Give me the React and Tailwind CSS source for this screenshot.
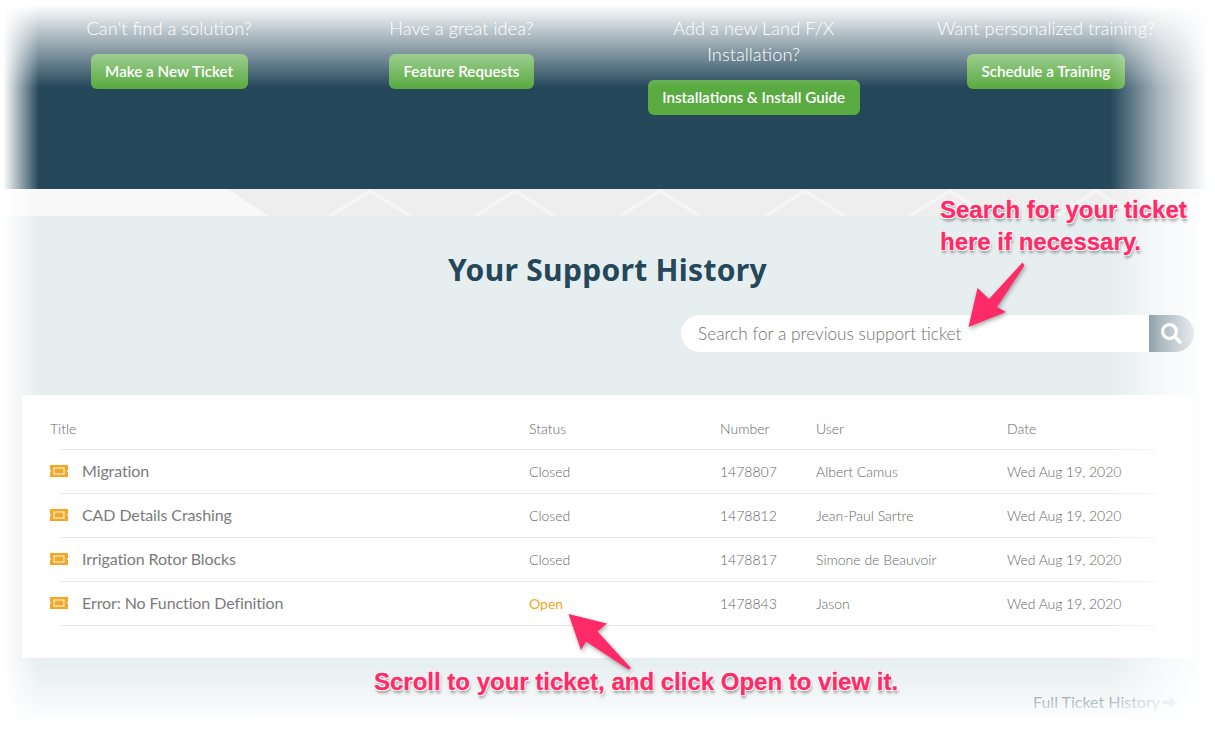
import React from "react";
import { FaSearch } from "react-icons/fa";

const prompts = [
  { q: "Can't find a solution?", label: "Make a New Ticket" },
  { q: "Have a great idea?", label: "Feature Requests" },
  { q: "Add a new Land F/X Installation?", label: "Installations & Install Guide" },
  { q: "Want personalized training?", label: "Schedule a Training" },
];

const tickets = [
  { title: "Migration", status: "Closed", number: "1478807", user: "Albert Camus" },
  { title: "CAD Details Crashing", status: "Closed", number: "1478812", user: "Jean-Paul Sartre" },
  { title: "Irrigation Rotor Blocks", status: "Closed", number: "1478817", user: "Simone de Beauvoir" },
  { title: "Error: No Function Definition", status: "Open", number: "1478843", user: "Jason" },
];

const apexes = [370, 515, 660, 805, 950, 1096];
const rowGrid = "grid grid-cols-[469px_191px_96px_191px_149px] items-center ml-[38px] mr-[37px] border-b border-[#e9e9e9]";
const calloutText =
  "font-['Liberation_Sans',Arial,sans-serif] font-bold text-[24px] leading-[32px] text-[#ff2a68] whitespace-nowrap [-webkit-text-stroke:0.3px_#ff2a68] [text-shadow:1px_1px_0_#fff,-1px_-1px_0_#fff,1px_-1px_0_#fff,-1px_1px_0_#fff,1px_3px_3px_rgba(0,0,0,0.4)]";

function TicketIcon() {
  return (
    <svg width="18" height="12" viewBox="0 0 18 12" className="shrink-0">
      <path d="M0 0H18V5A1 1 0 0 0 18 7V12H0V7A1 1 0 0 0 0 5Z" fill="#f5a623" />
      <rect x="4" y="3" width="10" height="6" fill="none" stroke="#fff" strokeWidth="1" />
    </svg>
  );
}

function Chevrons() {
  return (
    <svg width="1215" height="27" viewBox="0 0 1215 27" className="absolute inset-0">
      <path d="M0 0H228L268 27H0Z" fill="#f8f8f8" />
      {apexes.map((x) => (
        <path key={x} d="M-40 27L0 2L40 27" transform={`translate(${x} 0)`} fill="none" stroke="#f5f5f5" strokeWidth="3.5" />
      ))}
    </svg>
  );
}

export default function App() {
  return (
    <div className="relative w-[1215px] h-[729px] overflow-hidden flex flex-col bg-white font-['Lato',sans-serif]">
      {/* Header */}
      <header className="h-[189px] shrink-0 bg-[#24475a] px-[23px] pt-[15px] grid grid-cols-4 items-start">
        {prompts.map((p) => (
          <div key={p.label} className="flex flex-col items-center text-center">
            <p className="w-[235px] text-[18.3px] leading-[26px] font-light text-white">{p.q}</p>
            <button className="mt-[13px] h-[35px] px-[14.5px] rounded-[6px] bg-[#5aaa42] text-white text-[15.2px] font-semibold whitespace-nowrap">
              {p.label}
            </button>
          </div>
        ))}
      </header>

      {/* Pattern band */}
      <div className="relative h-[27px] shrink-0 bg-[#eeeeee]">
        <Chevrons />
      </div>

      {/* Support history */}
      <main className="flex-1 bg-[#e6eef0] flex flex-col">
        <h1 className="mt-[34px] text-center text-[30px] leading-[40px] tracking-[0.3px] font-bold text-[#24475a] font-['Noto_Sans',sans-serif]">
          Your Support History
        </h1>

        <div className="mt-[25px] mr-[21px] self-end w-[513px] h-[37px] flex rounded-full overflow-hidden bg-white">
          <input
            placeholder="Search for a previous support ticket"
            className="flex-1 pl-[17px] outline-none text-[17.25px] font-light text-[#666] placeholder:text-[#6f6f6f]"
          />
          <button className="w-[45px] bg-[#24475a] flex items-center justify-center">
            <FaSearch size={21} color="#fff" />
          </button>
        </div>

        <section className="mt-[43px] mx-[22px] bg-white pt-[12px] pb-[32px]">
          <div className={`${rowGrid} h-[43px] text-[14px] font-light text-[#666]`}>
            <span className="-ml-[10px]">Title</span>
            <span>Status</span>
            <span>Number</span>
            <span>User</span>
            <span>Date</span>
          </div>
          {tickets.map((t) => (
            <div key={t.number} className={`${rowGrid} h-[44px] text-[14px] font-light text-[#666]`}>
              <div className="-ml-[10px] pb-[2px] flex items-center gap-[14px] text-[16px] tracking-[-0.1px] font-normal text-[#7b7b7b]">
                <TicketIcon />
                {t.title}
              </div>
              <span className={t.status === "Open" ? "font-normal text-[#f5a623]" : ""}>{t.status}</span>
              <span>{t.number}</span>
              <span>{t.user}</span>
              <span className="tracking-[-0.05px]">Wed Aug 19, 2020</span>
            </div>
          ))}
        </section>

        <a className="mt-[32px] mr-[39px] self-end flex items-center gap-[3px] text-[16px] font-normal text-[#3f5d6d]">
          Full Ticket History
          <svg width="13" height="11" viewBox="0 0 14 12" className="opacity-70">
            <path d="M0 4H7V0L14 6L7 12V8H0Z" fill="currentColor" />
          </svg>
        </a>
      </main>

      {/* Faded edges of the capture */}
      <div className="absolute pointer-events-none top-0 inset-x-0 h-[88px] bg-gradient-to-b from-white from-[6%] to-transparent" />
      <div className="absolute pointer-events-none top-0 left-0 bottom-0 w-[39px] bg-gradient-to-r from-white from-[8%] to-transparent" />
      <div className="absolute pointer-events-none top-0 right-0 bottom-0 w-[105px] bg-[linear-gradient(to_left,#fff_7%,rgba(255,255,255,0.6)_54%,transparent_100%)]" />
      <div className="absolute pointer-events-none bottom-0 inset-x-0 h-[71px] bg-[linear-gradient(to_top,#fff_10%,rgba(255,255,255,0.55)_41%,transparent_100%)]" />

      {/* Callouts */}
      <p className={`absolute left-[940px] top-[194px] ${calloutText}`}>
        Search for your ticket
        <br />
        here if necessary.
      </p>
      <svg width="1215" height="729" viewBox="0 0 1215 729" className="absolute inset-0 pointer-events-none drop-shadow-[1px_2px_2px_rgba(0,0,0,0.35)]">
        <path d="M968.5 327L977.5 288L989 299L1022.5 262.5L1024.5 265.5L997 307L1006 312Z" fill="#ff2a68" />
        <path d="M568.5 614L607 623.5L597.5 631.5L631 668L628.5 669.5L586 641.5L581 650Z" fill="#ff2a68" />
      </svg>
      <p className={`absolute left-[374px] top-[666px] ${calloutText}`}>Scroll to your ticket, and click Open to view it.</p>
    </div>
  );
}
